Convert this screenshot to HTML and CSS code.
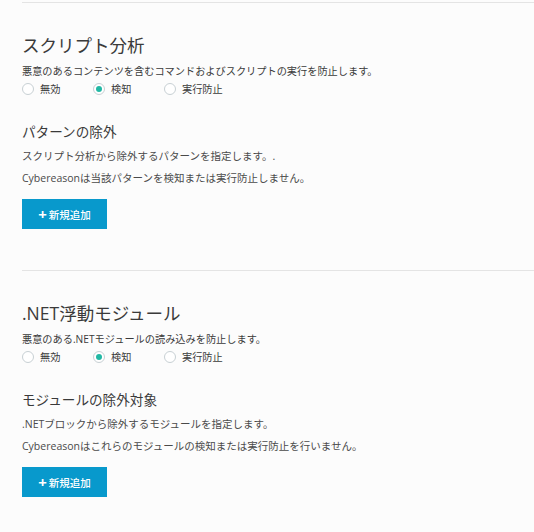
FILE: index.html
```html
<!DOCTYPE html><html><head><meta charset='utf-8'/>
<title>ポリシー設定</title>
<link rel="stylesheet" href="styles.css">
</head>
<body>

<div class="section">
	<h2>スクリプト分析</h2>
	<div class="desc">悪意のあるコンテンツを含むコマンドおよびスクリプトの実行を防止します。</div>
	<div class="modes">
		<label class="mode"><span class="radio"></span>無効</label>
		<label class="mode"><span class="radio on"></span>検知</label>
		<label class="mode"><span class="radio"></span>実行防止</label>
	</div>
	<h3>パターンの除外</h3>
	<p class="help">スクリプト分析から除外するパターンを指定します。.</p>
	<p class="help">Cybereasonは当該パターンを検知または実行防止しません。</p>
	<a class="button"><span class="plus">+</span>新規追加</a>
</div>

<div class="section">
	<h2>.NET浮動モジュール</h2>
	<div class="desc">悪意のある.NETモジュールの読み込みを防止します。</div>
	<div class="modes">
		<label class="mode"><span class="radio"></span>無効</label>
		<label class="mode"><span class="radio on"></span>検知</label>
		<label class="mode"><span class="radio"></span>実行防止</label>
	</div>
	<h3>モジュールの除外対象</h3>
	<p class="help">.NETブロックから除外するモジュールを指定します。</p>
	<p class="help">Cybereasonはこれらのモジュールの検知または実行防止を行いません。</p>
	<a class="button"><span class="plus">+</span>新規追加</a>
</div>

</body>
</html>
```
FILE: styles.css
```css
body {
	margin: 0px;
	padding-top: 2px;
	background-color: #fcfcfc;
	font-family: "Open Sans", "Noto Sans CJK JP", sans-serif;
	color: #444;
}
.section {
	margin-left: 22px;
	border-top: 1px solid #e4e4e4;
	padding-top: 30px;
	padding-bottom: 41px;
}
h2 {
	margin: 0;
	font-size: 17.5px;
	line-height: 24px;
	font-weight: normal;
	color: #3a3a3a;
}
.desc {
	margin-top: 6px;
	font-size: 10.2px;
	line-height: 16px;
	color: #3a3a3a;
}
.modes {
	display: flex;
	margin-top: 2px;
	font-size: 10.2px;
	line-height: 16px;
	color: #3a3a3a;
}
.mode {
	display: flex;
	align-items: center;
	width: 71px;
}
.radio {
	box-sizing: border-box;
	width: 12px;
	height: 12px;
	margin-right: 6px;
	border: 1px solid #c8d0d4;
	border-radius: 50%;
	background-color: #fff;
	display: flex;
	align-items: center;
	justify-content: center;
}
.radio.on::after {
	content: "";
	width: 6px;
	height: 6px;
	border-radius: 50%;
	background-color: #22b8a4;
}
h3 {
	margin: 25px 0 0 0;
	font-size: 13.6px;
	line-height: 20px;
	font-weight: normal;
	color: #3a3a3a;
}
.help {
	margin: 6px 0 0 0;
	font-size: 10.5px;
	line-height: 16px;
	color: #4a4a4a;
}
.help + .help {
	margin-top: 6px;
}
.button {
	display: flex;
	align-items: center;
	justify-content: center;
	width: 85px;
	height: 30px;
	margin-top: 13px;
	background-color: #0899cc;
	color: #fff;
	font-size: 10.5px;
	font-weight: 500;
	cursor: pointer;
}
.plus {
	font-size: 15px;
	font-weight: bold;
	line-height: 15px;
	margin-right: 2px;
}
```
